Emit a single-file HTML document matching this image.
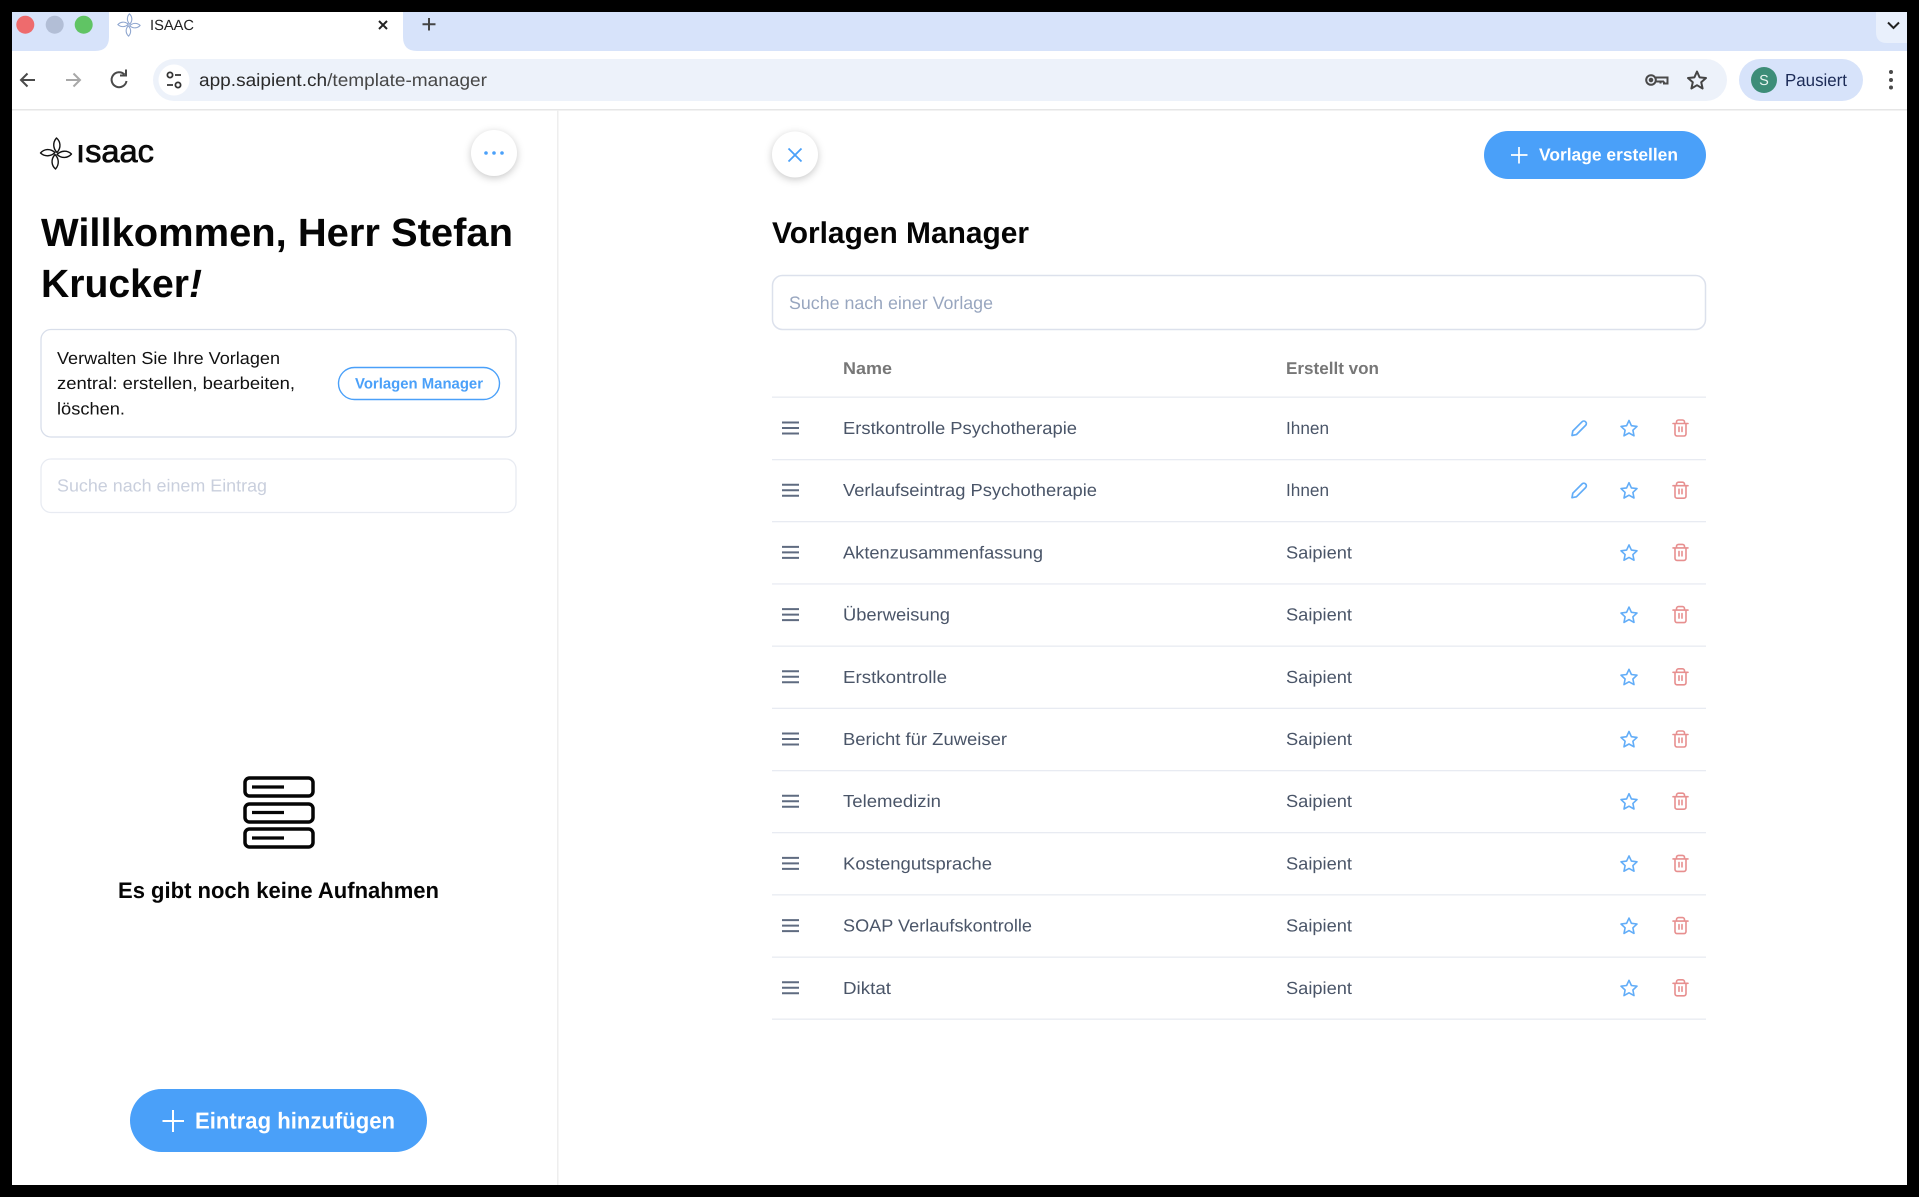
<!DOCTYPE html>
<html lang="de">
<head>
<meta charset="utf-8">
<title>ISAAC</title>
<style>
html,body{margin:0;padding:0;background:#000;width:1919px;height:1197px;overflow:hidden}
svg{display:block}
text{font-family:"Liberation Sans",Arial,sans-serif;text-rendering:geometricPrecision}
.b{font-weight:700}
.rn{font-size:17.5px;fill:#4a5568}
.ic{fill:none;stroke-linecap:round;stroke-linejoin:round}
</style>
</head>
<body>
<svg xmlns="http://www.w3.org/2000/svg" width="1919" height="1197" viewBox="0 0 1919 1197">
<defs>
  <g id="petals" fill="none" stroke-linejoin="round">
    <path d="M1,-1C-3,-5 -3.500,-11 0.500,-15.500C4.500,-12 5.500,-6 1,-1Z"/>
    <path d="M1,-1C-3,-5 -3.500,-11 0.500,-15.500C4.500,-12 5.500,-6 1,-1Z" transform="rotate(90)"/>
    <path d="M1,-1C-3,-5 -3.500,-11 0.500,-15.500C4.500,-12 5.500,-6 1,-1Z" transform="rotate(180)"/>
    <path d="M1,-1C-3,-5 -3.500,-11 0.500,-15.500C4.500,-12 5.500,-6 1,-1Z" transform="rotate(270)"/>
  </g>
  <g id="drag" stroke="#5f6b80" stroke-width="2">
    <path d="M782,-5.500H799M782,0H799M782,5.500H799"/>
  </g>
  <path id="star" class="ic" stroke="#62adf8" stroke-width="1.600" d="M1629,-7.500L1631.400,-2.300L1637,-1.600L1632.900,2.200L1634,7.800L1629,5L1624,7.800L1625.100,2.200L1621,-1.600L1626.600,-2.300Z"/>
  <g id="trash" class="ic" stroke="#e78f8f" stroke-width="1.600">
    <path d="M1673,-4.500H1688M1675,-4.500V6A2,2 0 0 0 1677,8H1684A2,2 0 0 0 1686,6V-4.500M1676.500,-4.500V-6A2,2 0 0 1 1678.500,-8H1682.500A2,2 0 0 1 1684.500,-6V-4.500M1679,-1V3.500M1682,-1V3.500"/>
  </g>
  <path id="pen" class="ic" stroke="#62adf8" stroke-width="1.700" d="M1572,7.500L1572.800,3L1582,-6.200A2.400,2.400 0 0 1 1585.600,-2.600L1576.400,6.600Z"/>
</defs>

<rect x="12" y="12" width="1895" height="1173" fill="#fff"/>

<!-- tab strip -->
<rect x="12" y="12" width="1895" height="39" fill="#d7e3fa"/>
<path d="M95,51Q109,51 109,37V12H403V37Q403,51 417,51Z" fill="#fff"/>
<path d="M1907,12H1876V32Q1876,43 1887,43H1907Z" fill="#e9f0fc"/>
<circle cx="25.300" cy="24.700" r="9" fill="#ee6b6d"/>
<circle cx="54.700" cy="24.700" r="9" fill="#b2bed6"/>
<circle cx="83.700" cy="24.700" r="9" fill="#60c464"/>
<use href="#petals" transform="translate(129,25) scale(.72)" stroke="#8fa6cf" stroke-width="1.500"/>
<text x="150" y="30" font-size="14.700" fill="#222" textLength="44" lengthAdjust="spacingAndGlyphs">ISAAC</text>
<path d="M379,21L387,29M387,21L379,29" stroke="#222" stroke-width="2"/>
<path d="M429,18V30.500M422.500,24.300H435.500" stroke="#444" stroke-width="2"/>
<path d="M1888,22.500L1893.500,28L1899,22.500" fill="none" stroke="#222" stroke-width="2"/>

<!-- toolbar -->
<rect x="12" y="109" width="1895" height="1.500" fill="#e6e6e6"/>
<g fill="none" stroke-width="2">
  <path d="M35,80H21.500M27.500,73.500L21,80L27.500,86.500" stroke="#4a4a4a"/>
  <path d="M66,80H80M73.500,73.500L80,80L73.500,86.500" stroke="#a8a8a8"/>
  <path d="M124.500,74.500A7.500,7.500 0 1 0 126.500,81" stroke="#4a4a4a"/>
  <path d="M120,75.500H126V69.500" stroke="#4a4a4a"/>
</g>
<rect x="153" y="59" width="1574" height="42" rx="21" fill="#edf2fa"/>
<circle cx="174" cy="80" r="15.500" fill="#fff"/>
<g fill="none" stroke="#333" stroke-width="1.800">
  <circle cx="170" cy="75" r="2.600"/><path d="M175,75H181M167,85H173"/><circle cx="178" cy="85" r="2.600"/>
</g>
<text x="199" y="86" font-size="17.800" fill="#2a2a2a" textLength="288" lengthAdjust="spacingAndGlyphs">app.saipient.ch<tspan fill="#474747">/template-manager</tspan></text>
<g fill="none" stroke="#4a4a4a" stroke-width="2">
  <circle cx="1651" cy="80" r="4.800"/>
  <path d="M1656,77.500H1667.500V83.500H1664V81.500M1660.500,81.500V83.500M1656,81.500H1664"/>
  <circle cx="1651" cy="80" r="1.300" fill="#4a4a4a"/>
</g>
<path d="M1697,71.500L1699.600,77.400L1706,78L1701.200,82.200L1702.600,88.500L1697,85.200L1691.400,88.500L1692.800,82.200L1688,78L1694.400,77.400Z" fill="none" stroke="#444" stroke-width="2" stroke-linejoin="round"/>
<rect x="1739" y="59" width="124" height="42" rx="21" fill="#d7e3fa"/>
<circle cx="1764" cy="80" r="13" fill="#3d8d78"/>
<text x="1764" y="85" font-size="14.500" fill="#e9f5f1" text-anchor="middle">S</text>
<text x="1785" y="86" font-size="17.500" fill="#1c2b57" textLength="62" lengthAdjust="spacingAndGlyphs">Pausiert</text>
<g fill="#4a4a4a"><circle cx="1891" cy="72" r="2"/><circle cx="1891" cy="80" r="2"/><circle cx="1891" cy="87.500" r="2"/></g>

<!-- left panel -->
<rect x="557" y="110" width="1.500" height="1075" fill="#eeeeee"/>
<use href="#petals" transform="translate(56,153.500)" stroke="#111" stroke-width="1.400"/>
<text x="76" y="162" font-size="31.500" fill="#0b0b0b" stroke="#0b0b0b" stroke-width=".7" textLength="78" lengthAdjust="spacingAndGlyphs">ısaac</text>

<circle cx="494" cy="153" r="23" fill="#fff" style="filter:drop-shadow(0 2px 4px rgba(0,0,0,.22))"/>
<g fill="#4aa0f9"><circle cx="486" cy="153" r="1.800"/><circle cx="494" cy="153" r="1.800"/><circle cx="502" cy="153" r="1.800"/></g>

<text x="41" y="246" class="b" font-size="39.500" fill="#050505" textLength="472" lengthAdjust="spacingAndGlyphs">Willkommen, Herr Stefan</text>
<text x="41" y="297" class="b" font-size="39.500" fill="#050505" textLength="161" lengthAdjust="spacingAndGlyphs">Krucker<tspan font-style="italic">!</tspan></text>

<rect x="41" y="329.500" width="475" height="107.500" rx="10" fill="#fff" stroke="#d8deea" stroke-width="1.300"/>
<text x="57" y="364" font-size="17.300" fill="#111" textLength="223" lengthAdjust="spacingAndGlyphs">Verwalten Sie Ihre Vorlagen</text>
<text x="57" y="389" font-size="17.300" fill="#111" textLength="238" lengthAdjust="spacingAndGlyphs">zentral: erstellen, bearbeiten,</text>
<text x="57" y="414.500" font-size="17.300" fill="#111" textLength="68" lengthAdjust="spacingAndGlyphs">löschen.</text>
<rect x="338.500" y="367.500" width="161" height="32" rx="16" fill="#fff" stroke="#4aa0f9" stroke-width="1.400"/>
<text x="355" y="388.500" class="b" font-size="15" fill="#4aa0f9" textLength="128" lengthAdjust="spacingAndGlyphs">Vorlagen Manager</text>

<rect x="41" y="459" width="475" height="53.500" rx="10" fill="#fff" stroke="#e8ebf2" stroke-width="1.300"/>
<text x="57" y="491.500" font-size="17.500" fill="#c9cfdd" textLength="210" lengthAdjust="spacingAndGlyphs">Suche nach einem Eintrag</text>

<g fill="none" stroke="#050505" stroke-width="3.500">
  <rect x="245" y="778" width="68" height="18" rx="4.500"/>
  <rect x="245" y="804" width="68" height="18" rx="4.500"/>
  <rect x="245" y="829" width="68" height="18" rx="4.500"/>
  <path d="M252,787H284M252,812.500H284M252,838H284" stroke-width="3.200"/>
</g>
<text x="118" y="898" class="b" font-size="22.500" fill="#050505" textLength="321" lengthAdjust="spacingAndGlyphs">Es gibt noch keine Aufnahmen</text>

<rect x="130" y="1089" width="297" height="63" rx="31.500" fill="#4aa0f9"/>
<path d="M173,1110V1132M162.500,1121H184" stroke="#fff" stroke-width="2" fill="none"/>
<text x="195" y="1128.500" class="b" font-size="23" fill="#fff" textLength="200" lengthAdjust="spacingAndGlyphs">Eintrag hinzufügen</text>

<!-- right panel -->
<circle cx="795" cy="154.500" r="23" fill="#fff" style="filter:drop-shadow(0 2px 4px rgba(0,0,0,.22))"/>
<path d="M788.500,148.500L801.500,161.500M801.500,148.500L788.500,161.500" stroke="#4aa0f9" stroke-width="1.800" fill="none"/>

<rect x="1484" y="131" width="222" height="48" rx="24" fill="#4aa0f9"/>
<path d="M1519,147V163.500M1511,155H1527.500" stroke="#fff" stroke-width="1.700" fill="none"/>
<text x="1539" y="160.500" class="b" font-size="17.500" fill="#fff" textLength="139" lengthAdjust="spacingAndGlyphs">Vorlage erstellen</text>

<text x="772" y="243" class="b" font-size="30" fill="#050505" textLength="257" lengthAdjust="spacingAndGlyphs">Vorlagen Manager</text>

<rect x="772.500" y="275.500" width="933" height="54" rx="10" fill="#fff" stroke="#dce1ec" stroke-width="1.500"/>
<text x="789" y="309" font-size="18" fill="#98a6bf" textLength="204" lengthAdjust="spacingAndGlyphs">Suche nach einer Vorlage</text>

<text x="843" y="374" class="b" font-size="17" fill="#777" textLength="49" lengthAdjust="spacingAndGlyphs">Name</text>
<text x="1286" y="374" class="b" font-size="17" fill="#777" textLength="93" lengthAdjust="spacingAndGlyphs">Erstellt von</text>

<g fill="#e8ebf2">
  <rect x="772" y="396.500" width="934" height="1.300"/>
  <rect x="772" y="459" width="934" height="1.300"/>
  <rect x="772" y="521" width="934" height="1.300"/>
  <rect x="772" y="583.300" width="934" height="1.300"/>
  <rect x="772" y="645.500" width="934" height="1.300"/>
  <rect x="772" y="707.700" width="934" height="1.300"/>
  <rect x="772" y="770" width="934" height="1.300"/>
  <rect x="772" y="832" width="934" height="1.300"/>
  <rect x="772" y="894.200" width="934" height="1.300"/>
  <rect x="772" y="956.500" width="934" height="1.300"/>
  <rect x="772" y="1018.500" width="934" height="1.300"/>
</g>

<!-- rows -->
<g transform="translate(0,428)"><use href="#drag"/><text x="843" y="6" class="rn" textLength="234" lengthAdjust="spacingAndGlyphs">Erstkontrolle Psychotherapie</text><text x="1286" y="6" class="rn" textLength="43" lengthAdjust="spacingAndGlyphs">Ihnen</text><use href="#pen"/><use href="#star"/><use href="#trash"/></g>
<g transform="translate(0,490.200)"><use href="#drag"/><text x="843" y="6" class="rn" textLength="254" lengthAdjust="spacingAndGlyphs">Verlaufseintrag Psychotherapie</text><text x="1286" y="6" class="rn" textLength="43" lengthAdjust="spacingAndGlyphs">Ihnen</text><use href="#pen"/><use href="#star"/><use href="#trash"/></g>
<g transform="translate(0,552.400)"><use href="#drag"/><text x="843" y="6" class="rn" textLength="200" lengthAdjust="spacingAndGlyphs">Aktenzusammenfassung</text><text x="1286" y="6" class="rn" textLength="66" lengthAdjust="spacingAndGlyphs">Saipient</text><use href="#star"/><use href="#trash"/></g>
<g transform="translate(0,614.600)"><use href="#drag"/><text x="843" y="6" class="rn" textLength="107" lengthAdjust="spacingAndGlyphs">Überweisung</text><text x="1286" y="6" class="rn" textLength="66" lengthAdjust="spacingAndGlyphs">Saipient</text><use href="#star"/><use href="#trash"/></g>
<g transform="translate(0,676.800)"><use href="#drag"/><text x="843" y="6" class="rn" textLength="104" lengthAdjust="spacingAndGlyphs">Erstkontrolle</text><text x="1286" y="6" class="rn" textLength="66" lengthAdjust="spacingAndGlyphs">Saipient</text><use href="#star"/><use href="#trash"/></g>
<g transform="translate(0,739)"><use href="#drag"/><text x="843" y="6" class="rn" textLength="164" lengthAdjust="spacingAndGlyphs">Bericht für Zuweiser</text><text x="1286" y="6" class="rn" textLength="66" lengthAdjust="spacingAndGlyphs">Saipient</text><use href="#star"/><use href="#trash"/></g>
<g transform="translate(0,801.200)"><use href="#drag"/><text x="843" y="6" class="rn" textLength="98" lengthAdjust="spacingAndGlyphs">Telemedizin</text><text x="1286" y="6" class="rn" textLength="66" lengthAdjust="spacingAndGlyphs">Saipient</text><use href="#star"/><use href="#trash"/></g>
<g transform="translate(0,863.400)"><use href="#drag"/><text x="843" y="6" class="rn" textLength="149" lengthAdjust="spacingAndGlyphs">Kostengutsprache</text><text x="1286" y="6" class="rn" textLength="66" lengthAdjust="spacingAndGlyphs">Saipient</text><use href="#star"/><use href="#trash"/></g>
<g transform="translate(0,925.600)"><use href="#drag"/><text x="843" y="6" class="rn" textLength="189" lengthAdjust="spacingAndGlyphs">SOAP Verlaufskontrolle</text><text x="1286" y="6" class="rn" textLength="66" lengthAdjust="spacingAndGlyphs">Saipient</text><use href="#star"/><use href="#trash"/></g>
<g transform="translate(0,987.800)"><use href="#drag"/><text x="843" y="6" class="rn" textLength="48" lengthAdjust="spacingAndGlyphs">Diktat</text><text x="1286" y="6" class="rn" textLength="66" lengthAdjust="spacingAndGlyphs">Saipient</text><use href="#star"/><use href="#trash"/></g>
</svg>
</body>
</html>
